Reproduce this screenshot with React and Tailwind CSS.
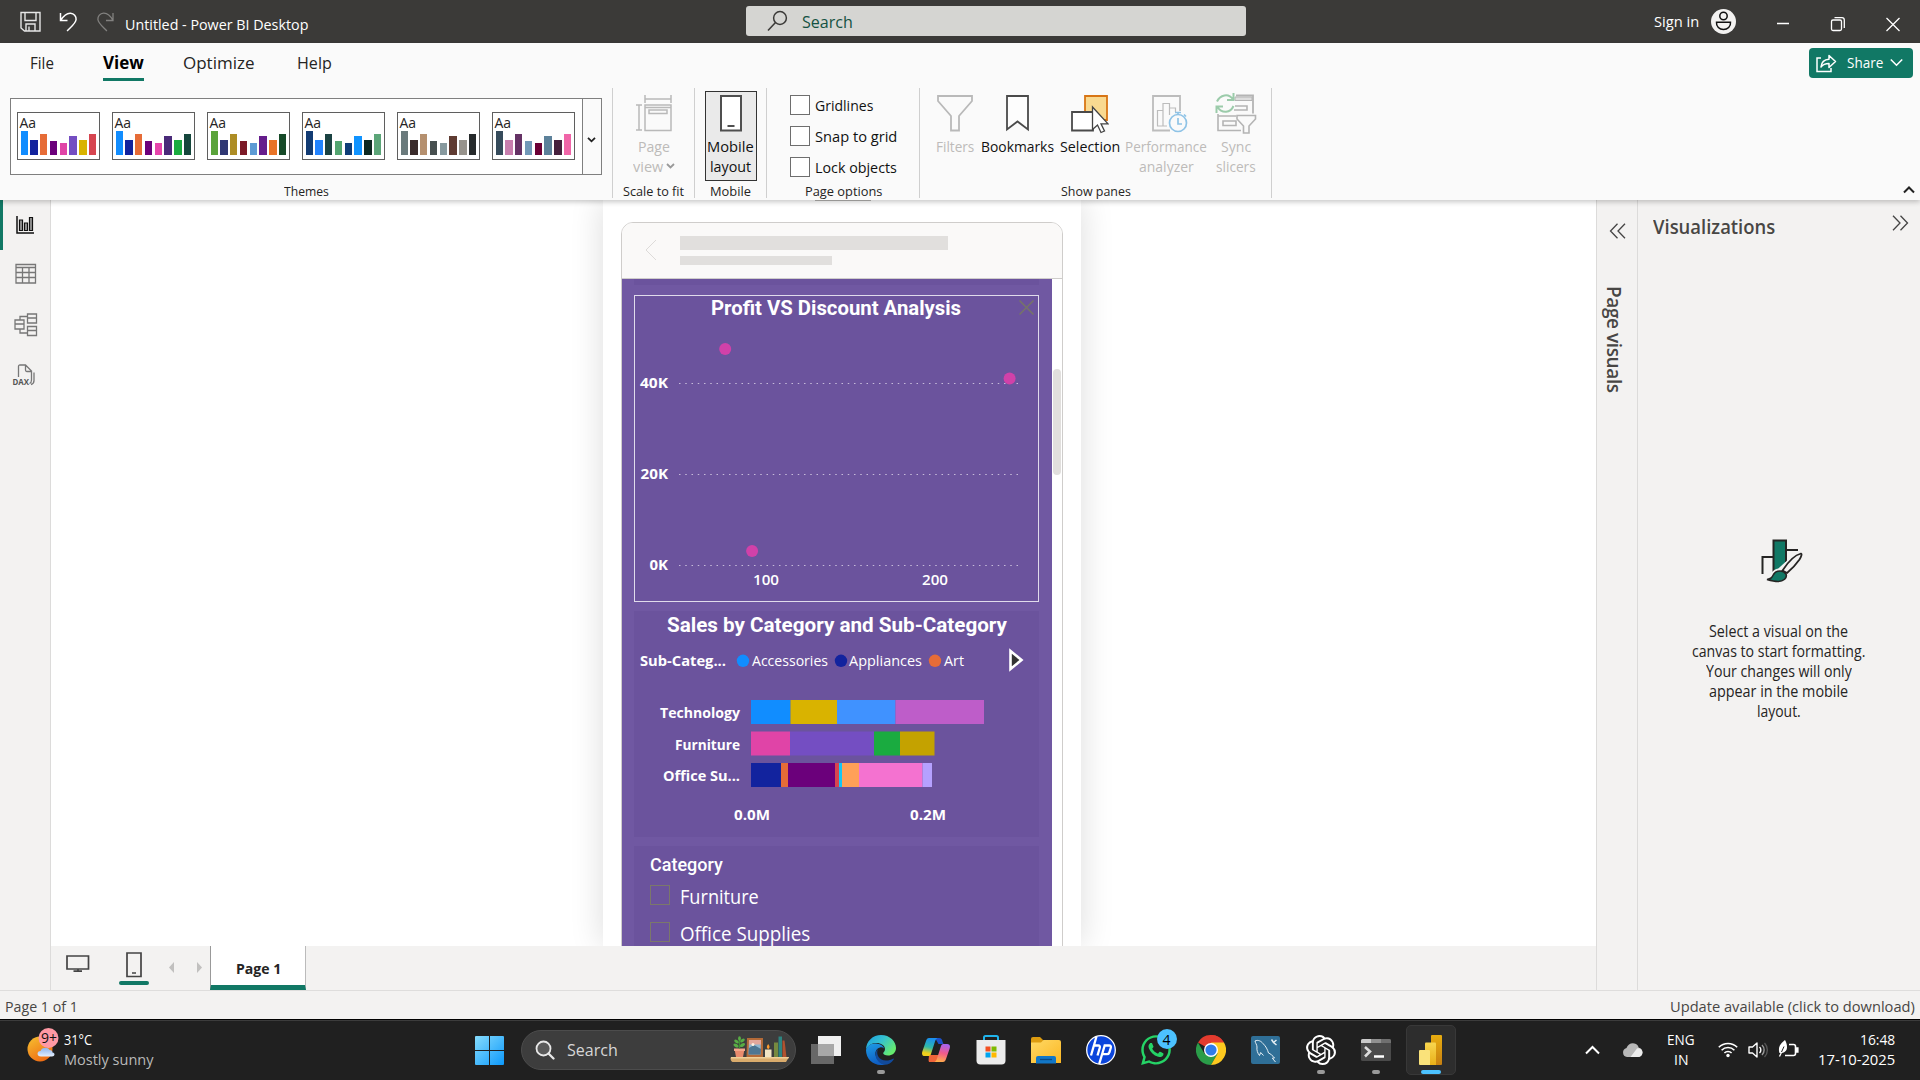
import React, { useLayoutEffect, useRef, useState } from "react";
import { SiOpenai } from "react-icons/si";
import { FaWhatsapp } from "react-icons/fa";

/* Text condensed or widened to an exact width. */
function Fit({ w, className = "", children }) {
  const ref = useRef(null);
  const [k, setK] = useState(1);
  useLayoutEffect(() => {
    const n = ref.current.offsetWidth;
    if (n) setK(w / n);
  }, [w]);
  return (
    <span className={"flex shrink-0 items-center justify-start " + className} style={{ width: w }}>
      <span ref={ref} className="inline-block shrink-0 origin-left whitespace-pre" style={{ transform: `scaleX(${k})` }}>
        {children}
      </span>
    </span>
  );
}

const HEIGHTS = [24, 15, 21, 14, 12, 19, 15, 21];
const THEMES = [
  ["#118DFF", "#12239E", "#E66C37", "#6B007B", "#E044A7", "#744EC2", "#D9B300", "#D64550"],
  ["#118DFF", "#12239E", "#E66C37", "#6B007B", "#E645AB", "#4A2A79", "#1AAB40", "#15463C"],
  ["#5AA33A", "#2F3774", "#AD8D25", "#7C1A27", "#5C9AD4", "#651D8C", "#E87427", "#164A28"],
  ["#123B73", "#2283FF", "#1B4242", "#52A570", "#0F3D77", "#1093FF", "#0D2820", "#5BA578"],
  ["#6A7A7C", "#3A2B2B", "#B5906F", "#474F4F", "#87999E", "#5F3B32", "#97938C", "#262A2B"],
  ["#364B5B", "#C87FAE", "#653265", "#7199B8", "#6B0035", "#5C819A", "#46203D", "#F065A8"],
];

function ThemeThumb({ colors }) {
  return (
    <div className="flex h-[48px] w-[83px] shrink-0 flex-col justify-between border border-[#5f5f5f] bg-white pt-[3px] pb-[4px] pl-[2px] pr-[2px]">
      <Fit w={17} className="h-[13px] text-[14px] text-[#252423]">Aa</Fit>
      <div className="flex items-end gap-[2.5px] pl-px">
        {colors.map((c, i) => (
          <div key={i} className="w-[7.3px]" style={{ height: HEIGHTS[i], backgroundColor: c }} />
        ))}
      </div>
    </div>
  );
}

function TitleBar() {
  return (
    <header className="flex h-[43px] items-start bg-[#3b3a38] text-white">
      <svg className="mt-[11px] ml-[20px] shrink-0" width="21" height="21" fill="none" stroke="#e6e6e6" strokeWidth="1.4">
        <path d="M1 1.5h19v18.5H4.5L1 17zM5 1.5v8h11v-8M6 20v-7h9v7M9 15.500v4.500" />
      </svg>
      <svg className="mt-[11px] ml-[18px] shrink-0" width="19" height="21" fill="none" stroke="#fff" strokeWidth="1.5">
        <path d="M1.500 2v7.500h7M1.500 9.500C5 4 8 2 11.500 2.200c3.500.2 5.800 3 5.600 6.300-.3 3.500-3 5.500-9 11.500" />
      </svg>
      <svg className="mt-[11px] ml-[18px] shrink-0" width="19" height="21" fill="none" stroke="#82817f" strokeWidth="1.3">
        <path d="M17 2v7.500h-7M17 9.500C14 4 11 2 7.500 2.200c-3.500.2-5.800 3-5.600 6.300.3 3.500 3 5.500 9 11.500" />
      </svg>
      <Fit w={183} className="mt-[14px] ml-[10px] h-[20px] text-[15px]">Untitled - Power BI Desktop</Fit>
      <div className="mt-[6px] ml-[438px] flex h-[30px] w-[500px] shrink-0 items-center rounded-[3px] bg-[#d5d5d2] pl-[21px]">
        <svg width="21" height="22" fill="none" stroke="#3b3a38" strokeWidth="1.5">
          <circle cx="13" cy="8" r="6.400" />
          <path d="M8.500 12.500L1 20.500" />
        </svg>
        <Fit w={51} className="ml-[14px] pt-[2px] text-[17px] text-[#145243]">Search</Fit>
      </div>
      <Fit w={45} className="mt-[11px] ml-[408px] h-[20px] text-[15px]">Sign in</Fit>
      <svg className="mt-[8px] ml-[11px] shrink-0" width="27" height="27">
        <circle cx="13.500" cy="13.500" r="12.500" fill="#f3f2f1" />
        <g fill="none" stroke="#111" strokeWidth="1.500">
          <circle cx="13.500" cy="8" r="3.700" />
          <path d="M6.500 14.200h14c.5 4.300-3 7.300-7 7.300s-7.500-3-7-7.300z" />
        </g>
      </svg>
      <svg className="ml-[38px] shrink-0" width="130" height="43" fill="none" stroke="#fff" strokeWidth="1.3">
        <path d="M2 23.500h12M111.500 18l13 13M124.500 18l-13 13" />
        <rect x="56.500" y="20" width="10" height="10.500" rx="1.500" />
        <path d="M59.500 17.700h7.500c1.400 0 2.300.9 2.300 2.300v8" />
      </svg>
    </header>
  );
}

function TabRow() {
  return (
    <nav className="flex h-[45px] items-start text-[17px] text-[#252423]">
      <Fit w={24} className="mt-[8px] ml-[30px] h-[24px]">File</Fit>
      <div className="mt-[8px] ml-[49px] flex h-[30px] w-[41px] shrink-0 flex-col justify-between border-b-[3px] border-[#117865]">
        <Fit w={41} className="h-[24px] font-bold text-black">View</Fit>
      </div>
      <Fit w={72} className="mt-[8px] ml-[39px] h-[24px]">Optimize</Fit>
      <Fit w={35} className="mt-[8px] ml-[42px] h-[24px]">Help</Fit>
      <button className="mt-[5px] mr-[7px] ml-auto flex h-[30px] w-[104px] items-center rounded-[4px] bg-[#117865] pl-[7px] text-white">
        <svg className="-mt-px" width="22" height="20" fill="none" stroke="#fff" strokeWidth="1.500">
          <path d="M5 5H1v13.500h14V15" />
          <path d="M5 14c.5-5 3-7.500 8-7.700V2.500l6.500 6-6.500 6v-4c-4 0-6 .8-8 3.500z" strokeLinejoin="round" />
        </svg>
        <Fit w={36} className="-mt-px ml-[9px] text-[15px]">Share</Fit>
        <svg className="-mt-px ml-[7px]" width="13" height="9" fill="none" stroke="#fff" strokeWidth="1.600"><path d="M.8 1.500l5.700 5.700 5.700-5.700" /></svg>
      </button>
    </nav>
  );
}

function Group({ label, lw, className, children }) {
  return (
    <section className={"flex h-[110px] shrink-0 flex-col items-center justify-between border-r border-[#cfcfcf] " + className}>
      {children}
      <Fit w={lw} className="h-[13px] text-[13.5px] leading-none text-[#252423]">{label}</Fit>
    </section>
  );
}

function Tool({ icon, lines, className = "text-[#111]" }) {
  return (
    <div className={"flex flex-col items-center text-[15px] leading-[20px] " + className}>
      <div className="mb-[2px] flex h-[39px] items-start justify-center">{icon}</div>
      {lines.map(([t, w, extra]) => (
        <div key={t} className="flex h-[20px] items-center">
          <Fit w={w}>{t}</Fit>
          {extra}
        </div>
      ))}
    </div>
  );
}

const Funnel = ({ s = "#b9b9b9" }) => (
  <svg width="36" height="37" fill="#fafafa" stroke={s} strokeWidth="1.800">
    <path d="M1 1h34v5L22 21v14.500h-8V21L1 6z" />
  </svg>
);

function Ribbon() {
  return (
    <div className="relative z-10 h-[157px] bg-[#fafafa] shadow-[0_2px_5px_rgba(0,0,0,0.22)]">
      <TabRow />
      <div className="flex">
        <Group label="Themes" lw={45} className="w-[613px]">
          <div className="mt-[10px] ml-[-1px] flex h-[77px] w-[592px] border border-[#7f7f7f] bg-white">
            <div className="flex w-[571px] items-center gap-[12px] pb-px pl-[6px]">
              {THEMES.map((c, i) => <ThemeThumb key={i} colors={c} />)}
            </div>
            <div className="flex flex-1 items-center justify-center border-l border-[#7f7f7f] bg-[#fafafa] pt-[6px]">
              <svg width="9" height="6" fill="none" stroke="#222" strokeWidth="1.800"><path d="M1 .8l3.500 3.500L8 .8" /></svg>
            </div>
          </div>
        </Group>
        <Group label="Scale to fit" lw={61} className="w-[82px]">
          <Tool
            className="mt-[7px] text-[#bdbbb9]"
            icon={
              <svg width="37" height="37" fill="none" stroke="#b9b9b9" strokeWidth="1.500">
                <path d="M10 0v8M36 0v8M10 4h26M1 10h6M1 35h6M4 10v25" />
                <path d="M10 10h26v25.500H10zM10 12.500h26M14 15h18v3.500H14z" />
              </svg>
            }
            lines={[["Page", 32], ["view", 30, <svg key="v" className="ml-[3px]" width="9" height="6" fill="none" stroke="#999" strokeWidth="1.800"><path d="M1 1l3.500 3.500L8 1" /></svg>]]}
          />
        </Group>
        <Group label="Mobile" lw={41} className="w-[72px]">
          <div className="mt-[3px] ml-px flex h-[90px] w-[52px] justify-center border border-[#333] bg-[#eaeaea] pt-[3px]">
            <Tool
              className="-ml-px text-[#111]"
              icon={
                <svg width="22" height="37" fill="#fff" stroke="#4f4f4f" strokeWidth="2">
                  <path d="M1 1h20v34.500H1zM7.500 31h7" />
                </svg>
              }
              lines={[["Mobile", 47], ["layout", 41]]}
            />
          </div>
        </Group>
        <Group label="Page options" lw={77} className="w-[153px]">
          <div className="mt-[7px] flex w-full flex-col gap-[11px] pl-[23px] text-[15px] text-[#111]">
            {[["Gridlines", 58], ["Snap to grid", 82], ["Lock objects", 82]].map(([t, w]) => (
              <label key={t} className="flex h-[20px] items-center gap-[5px]">
                <span className="h-[20px] w-[20px] border border-[#6e6e6e] bg-white" />
                <Fit w={w} className="h-[20px]">{t}</Fit>
              </label>
            ))}
          </div>
        </Group>
        <Group label="Show panes" lw={70} className="w-[352px]">
          <div className="mt-[7px] flex w-full pl-[12px]">
            <Tool className="w-[45px] text-[#bdbbb9]" icon={<Funnel />} lines={[["Filters", 38]]} />
            <Tool
              className="w-[80px] text-[#111]"
              icon={<svg width="23" height="37" fill="#fdfdfd" stroke="#4a4a4a" strokeWidth="1.800"><path d="M1 1h21v33.500l-10.500-8-10.500 8z" /></svg>}
              lines={[["Bookmarks", 73]]}
            />
            <Tool
              className="w-[65px] text-[#111]"
              icon={
                <svg width="38" height="39">
                  <path d="M14 1h22v24H14z" fill="#f9d990" stroke="#d87515" strokeWidth="1.800" />
                  <path d="M1 17h21v18.500H1z" fill="#fff" stroke="#4a4a4a" strokeWidth="1.800" />
                  <path d="M21.500 12v22.500l5-4.500 3.500 7.500 3.500-1.500-3.500-7.200h7z" fill="#fff" stroke="#444" strokeWidth="1.300" />
                </svg>
              }
              lines={[["Selection", 60]]}
            />
            <Tool
              className="w-[88px] text-[#bdbbb9]"
              icon={
                <svg className="ml-[8px]" width="36" height="39" fill="none" stroke="#bcbcbc" strokeWidth="1.500">
                  <path d="M18 35.500H1V1h27v15" strokeWidth="1.800" />
                  <path d="M5.500 31V15.500h5.500V31zM11 31V8.500h6.500V20M17.500 13h6v4M11 31h4" strokeWidth="1.200" />
                  <g stroke="#8fc3e6" strokeWidth="1.700">
                    <circle cx="26" cy="28" r="8.500" />
                    <path d="M26 23v6h4M23 17.500h6M26 17v3M32 19.500l2 2" />
                  </g>
                </svg>
              }
              lines={[["Performance", 82], ["analyzer", 55]]}
            />
            <Tool
              className="w-[52px] text-[#bdbbb9]"
              icon={
                <svg className="-mt-[2px]" width="42" height="41" fill="none" stroke="#b4b4b4" strokeWidth="1.600">
                  <path d="M21 2.500h17v18" strokeWidth="1.800" />
                  <path d="M20 4h17v3.500H20z" fill="#dedede" strokeWidth="1" />
                  <path d="M20 13h12v4H19M3 21v16.500h23M3 23h18M8 28h13v4.500H8z" />
                  <path d="M22 22.500h18.500v3.500l-6.500 7v7h-5.500v-7l-6.500-7z" fill="#fafafa" />
                  <g stroke="#9bcbaa" strokeWidth="2">
                    <path d="M2 8.500C5 2 13.500-.5 18 6.500M18.500 0v7h-6.500M18.500 13C15.500 20 7 21 2.500 14M1.500 20v-6.500H8" />
                  </g>
                </svg>
              }
              lines={[["Sync", 30], ["slicers", 40]]}
            />
          </div>
        </Group>
        <svg className="mt-[98px] mr-[5px] ml-auto" width="12" height="8" fill="none" stroke="#222" strokeWidth="2"><path d="M1 6.500l5-5 5 5" /></svg>
      </div>
    </div>
  );
}

function LeftRail() {
  return (
    <aside className="flex w-[51px] shrink-0 flex-col border-r border-[#dcdbda] bg-[#f3f2f1]">
      <div className="flex h-[50px] items-start border-l-[3px] border-[#117865] pt-[15px] pl-[13px]">
        <svg width="19" height="20" fill="#999" stroke="#111" strokeWidth="1.200">
          <path d="M1 1v17h17" fill="none" strokeWidth="1.500" />
          <path d="M3.500 5h3v10.500h-3zM8.500 8h3v7.500h-3zM13.500 2.500h3v13h-3z" />
        </svg>
      </div>
      <svg className="mt-[13px] ml-[15px]" width="22" height="22" fill="none" stroke="#777" strokeWidth="1.300">
        <path d="M1 1.500h19.500v18.500H1zM1 4.500h19.500M1 9.500h19.500M1 14.500h19.500M7.500 4.500V20M14 4.500V20" />
      </svg>
      <svg className="mt-[28px] ml-[14px]" width="24" height="24" fill="none" stroke="#777" strokeWidth="1.300">
        <path d="M1 7h9v9H1zM1 11h9M13.500 1H22.500v9h-9zM13.500 5h9M13.500 13.500h9v9h-9zM13.500 17.500h9M6 7V3.500h7.500M6 16v4h7.500" />
      </svg>
      <svg className="mt-[27px] ml-[12px]" width="24" height="22" fill="none" stroke="#777" strokeWidth="1.300">
        <path d="M6.500 13V2.500c0-1 .5-1.500 1.500-1.500h5.500l6 6v9c0 2-.5 3-2 3.500M13.500 1v5c0 1 .3 1.500 1.300 1.500h4.700M22 8.500v8c0 2.500-1 3.500-3 4" />
        <text x="0.500" y="20.500" fontSize="8" fill="#555" stroke="none" fontWeight="700" textLength="16.500" lengthAdjust="spacingAndGlyphs" fontFamily="Open Sans, sans-serif">DAX</text>
      </svg>
    </aside>
  );
}

/* SVG label with a fixed drawn width; y is the centre of its capitals. */
function Label({ x, y, w, size = 15, weight = 700, font = "Open Sans, sans-serif", children }) {
  return (
    <text x={x} y={y + size * 0.357} fontSize={size} fontWeight={weight} fontFamily={font} fill="#fff" textLength={w} lengthAdjust="spacingAndGlyphs">
      {children}
    </text>
  );
}

const DIN = "Roboto, sans-serif";

function ScatterChart() {
  return (
    <svg className="block bg-[#6b539d]" width="405" height="307">
      <rect x="0.500" y="0.500" width="404" height="306" fill="none" stroke="#e0dbeb" />
      <Label x={77} y={13} w={250} size={20.500} font={DIN}>Profit VS Discount Analysis</Label>
      <path d="M385.500 5.500l14 14M399.500 5.500l-14 14" stroke="#767468" strokeWidth="1.500" />
      {[[88.500, "40K", 6, 28], [179.500, "20K", 6.500, 27.500], [270.500, "0K", 15.500, 18.500]].map(([y, t, x, w]) => (
        <g key={t}>
          <path d={`M45 ${y}H386`} stroke="#c6bbd9" strokeWidth="1" strokeDasharray="1.500 4.750" />
          <Label x={x} y={y - 1} w={w} size={15}>{t}</Label>
        </g>
      ))}
      <Label x={119} y={285} w={26} weight={600}>100</Label>
      <Label x={288} y={285} w={26} weight={600}>200</Label>
      <g fill="#d141a9">
        <circle cx="91.200" cy="54" r="6" />
        <circle cx="375.600" cy="83.500" r="6" />
        <circle cx="118.100" cy="256" r="6" />
      </g>
    </svg>
  );
}

const ROWS = [
  { label: "Technology", lx: 26, lw: 80, y: 89, segs: [[117, 39.500, "#118DFF"], [156.500, 46.500, "#D9B300"], [203, 58.500, "#4092FF"], [261.500, 88.500, "#BE5DC9"]] },
  { label: "Furniture", lx: 41, lw: 65, y: 120.500, segs: [[117, 39, "#E044A7"], [156, 84, "#744EC2"], [240, 26, "#1AAB40"], [266, 34.500, "#C4A200"]] },
  { label: "Office Su...", lx: 29, lw: 77, y: 152, segs: [[117, 30, "#12239E"], [147, 7, "#E66C37"], [154, 47, "#6B007B"], [201, 4, "#D64550"], [205, 3, "#15C6F4"], [208, 17, "#FFA058"], [225, 63.500, "#F472D0"], [288.500, 9.500, "#B5A1FF"]] },
];

function SalesChart() {
  return (
    <svg className="mt-[9px] block bg-[#6b539d]" width="405" height="226">
      <Label x={33} y={14} w={340} size={20.500} font={DIN}>Sales by Category and Sub-Category</Label>
      <Label x={6} y={50} w={86}>Sub-Categ...</Label>
      <circle cx="109" cy="49.800" r="6.200" fill="#118DFF" />
      <Label x={118} y={50} w={76} weight={400}>Accessories</Label>
      <circle cx="207" cy="49.800" r="6.200" fill="#12239E" />
      <Label x={215} y={50} w={73} weight={400}>Appliances</Label>
      <circle cx="301" cy="49.800" r="6.200" fill="#E66C37" />
      <Label x={310} y={50} w={20} weight={400}>Art</Label>
      <path d="M376.500 40v18l11-9z" fill="#333" stroke="#fff" strokeWidth="2.600" />
      {ROWS.map((r) => (
        <g key={r.label}>
          <Label x={r.lx} y={r.y + 12.800} w={r.lw}>{r.label}</Label>
          {r.segs.map(([x, w, c]) => <rect key={x} x={x} y={r.y} width={w} height="24" fill={c} />)}
        </g>
      ))}
      <Label x={100} y={204} w={36}>0.0M</Label>
      <Label x={276} y={204} w={36}>0.2M</Label>
    </svg>
  );
}

function Slicer() {
  return (
    <div className="mt-[9px] h-[110px] bg-[#6b539d] pt-[8px] pl-[16px] text-white">
      <Fit w={73} className="h-[22px] text-[17.500px] font-medium [font-family:Roboto,sans-serif]">Category</Fit>
      {[["Furniture", 79, "mt-[8px]"], ["Office Supplies", 130, "mt-[13px]"]].map(([t, w, m]) => (
        <div key={t} className={"flex h-[24px] items-start " + m}>
          <span className="mt-px h-[20px] w-[20px] border border-[#7b776b]" />
          <Fit w={w} className="mt-px ml-[10px] h-[24px] text-[19.500px]">{t}</Fit>
        </div>
      ))}
    </div>
  );
}

function PageTabs() {
  return (
    <div className="flex h-[44px] shrink-0 items-start bg-[#f3f2f1]">
      <svg className="mt-[8px] ml-[15px]" width="24" height="19" fill="none" stroke="#444" strokeWidth="1.700">
        <path d="M1 2h21.500v13H1zM12 15v3M7.500 17.200h8.500" />
      </svg>
      <div className="mt-[6px] ml-[29px] flex h-[33px] w-[30px] flex-col items-center justify-between">
        <svg className="-ml-px" width="16" height="26" fill="none" stroke="#444" strokeWidth="1.700"><path d="M1 1h14v23.500H1zM6 21h4" /></svg>
        <span className="h-[4px] w-[30px] rounded-full bg-[#117865]" />
      </div>
      <svg className="mt-[16px] ml-[20px]" width="5" height="11" fill="#c1c0bf"><path d="M5 0v11L0 5.500z" /></svg>
      <svg className="mt-[16px] ml-[23px]" width="5" height="11" fill="#c1c0bf"><path d="M0 0v11l5-5.500z" /></svg>
      <div className="ml-[8px] flex h-[44px] w-[96px] items-center border-r border-b-[5px] border-l border-r-[#bbb] border-b-[#117865] border-l-[#999] bg-white pt-[6px] pl-[25px]">
        <Fit w={45} className="text-[15px] font-bold text-[#252423]">Page 1</Fit>
      </div>
    </div>
  );
}

function Canvas() {
  return (
    <main className="flex w-[1545px] shrink-0 flex-col overflow-hidden bg-white">
      <div className="relative flex h-[746px] justify-start overflow-hidden pl-[552px]">
        <div className="h-full w-[478px] bg-white px-[18px] pt-[22px] shadow-[0_0_32px_rgba(0,0,0,0.14)]">
          <div className="h-[740px] w-[442px] overflow-hidden rounded-t-[12px] border border-[#cfcdcb] bg-white">
            <div className="flex h-[56px] items-start border-b border-[#cfcdcb] bg-[#faf9f8] pt-[13px]">
              <svg className="mt-[3px] ml-[22px]" width="13" height="22" fill="none" stroke="#dddbd9"><path d="M12 1L2 11l10 10" /></svg>
              <div className="ml-[23px] flex flex-col gap-[6px]">
                <span className="h-[14px] w-[268px] bg-[#e1dfdd]" />
                <span className="h-[9px] w-[152px] bg-[#e1dfdd]" />
              </div>
            </div>
            <div className="flex">
              <div className="w-[430px] bg-[#7058a2] pl-[12px]">
                <div className="mb-[10px] h-[6px] w-[405px] bg-[#6b539d]" />
                <ScatterChart />
                <SalesChart />
                <div className="w-[405px]"><Slicer /></div>
              </div>
              <div className="mt-[90px] ml-px h-[106px] w-[8px] rounded-full bg-[#e1dfdd]" />
            </div>
          </div>
        </div>
        <span className="absolute top-0 left-[764px] h-px w-[56px] bg-[#b5b3b1]" />
      </div>
      <PageTabs />
    </main>
  );
}

function RightPanels() {
  return (
    <>
      <aside className="flex w-[41px] shrink-0 flex-col items-center border-l border-[#dcdbda] bg-[#f3f2f1] text-[#484644]">
        <svg className="mt-[23px]" width="17" height="16" fill="none" stroke="#444" strokeWidth="1.300"><path d="M8.500.8L1.500 8l7 7.200M16 .8L9 8l7 7.200" /></svg>
        <div className="mt-[47px] mr-[6px] flex h-[109px] w-[26px] items-start text-[19px] font-semibold [writing-mode:vertical-rl]">
          <span className="inline-block w-[26px] text-center leading-[26px] tracking-[-0.4px] whitespace-nowrap">Page visuals</span>
        </div>
      </aside>
      <aside className="flex flex-1 flex-col items-center border-l border-[#dcdbda] bg-[#f3f2f1]">
        <div className="flex w-full items-start pl-[15px]">
          <Fit w={122} className="mt-[14px] h-[26px] text-[19.500px] font-semibold text-[#484644]">Visualizations</Fit>
          <svg className="mt-[15px] mr-[11px] ml-auto" width="17" height="16" fill="none" stroke="#444" strokeWidth="1.300"><path d="M1 .8L8 8l-7 7.200M8.500.8l7 7.200-7 7.200" /></svg>
        </div>
        <svg className="mt-[299px] ml-[5px]" width="42" height="44" fill="none" stroke="#252423" strokeWidth="2">
          <path d="M1.500 35V18h11M25 11h12" />
          <path d="M12.500 34V1.500H25v21L12.500 34z" fill="#117865" stroke="none" />
          <path d="M12.500 33V1.500H25V23" />
          <path d="M22 31.500C27 23 34 16 40 14.500c1.200.3.300 3-1.500 6-3.500 5-7.500 9.500-11.500 13.500z" fill="#f3f2f1" stroke="#f3f2f1" strokeWidth="5" />
          <path d="M6 40.500c4-.5 5-2 6.500-5 2.500-4.500 10-4.500 12.500-.5 1.500 4-2.500 7.500-8 7.500-4 0-7.500-1-11-2z" fill="#f3f2f1" stroke="#f3f2f1" strokeWidth="5" />
          <path d="M21.500 31.500C27 23 34 16 40 14.500c1.200.3.300 3-1.500 6-3.500 5-7.500 9.500-12.500 13.500z" fill="#f3f2f1" strokeWidth="1.800" />
          <path d="M6 40.500c4-.5 5-2 6.500-5 2.500-4.500 10-4.500 12.500-.5 1.500 4-2.500 7.500-8 7.500-4 0-7.500-1-11-2z" fill="#117865" strokeWidth="1.600" />
        </svg>
        <div className="mt-[38px] -ml-px flex flex-col items-center text-[15.500px] leading-[20px] text-[#252423]">
          <Fit w={139}>Select a visual on the</Fit>
          <Fit w={173}>canvas to start formatting.</Fit>
          <Fit w={146}>Your changes will only</Fit>
          <Fit w={139}>appear in the mobile</Fit>
          <Fit w={44}>layout.</Fit>
        </div>
      </aside>
    </>
  );
}

function Tile({ children, dot, active }) {
  return (
    <div className="flex w-[55px] shrink-0 flex-col items-center pt-[5px]">
      <div className={"flex h-[50px] w-[50px] flex-col items-center justify-end rounded-[5px] " + (active ? "border border-[#383838] bg-[#2d2d2d]" : "border border-transparent")}>
        <div className="flex h-[34px] w-[34px] shrink-0 items-center justify-center">{children}</div>
        <span className={"mt-[3px] h-[4px] shrink-0 rounded-full " + (active ? "w-[20px] bg-[#4cc2ff]" : dot ? "w-[8px] bg-[#9a9a9a]" : "w-[8px]")} />
      </div>
    </div>
  );
}

function ShelfArt() {
  return (
    <svg width="60" height="28">
      <path d="M1 21h58l-3 5H2.500C1 26 0 22.500 1 21z" fill="#d9ab6c" />
      <path d="M1 21h58l-.6 1.500H1z" fill="#efcf98" />
      <path d="M4.500 13h10l-1.500 8H6z" fill="#e98b6d" /><path d="M4 12.500h11v2.500H4z" fill="#f4a78a" />
      <path d="M9.500 12.500V4" stroke="#3f8f35" strokeWidth="1.400" />
      <g fill="#58ad45"><ellipse cx="6" cy="9.500" rx="2.800" ry="1.600" transform="rotate(30 6 9.500)" /><ellipse cx="12.500" cy="9" rx="2.800" ry="1.600" transform="rotate(-30 12.500 9)" /><ellipse cx="6.500" cy="5.500" rx="2.600" ry="1.500" transform="rotate(35 6.500 5.500)" /><ellipse cx="12.500" cy="4.500" rx="2.600" ry="1.500" transform="rotate(-35 12.500 4.500)" /><ellipse cx="9.500" cy="2.500" rx="1.400" ry="2.300" /></g>
      <path d="M17 2h16v19H16.500z" fill="#b36a38" /><path d="M19 4h12l-.5 14.500H18.500z" fill="#8fb6d0" /><path d="M19 12l5-3 7 4-.5 5.500h-12z" fill="#4d7693" /><path d="M19 4h12v4.500H19z" fill="#e3a79b" />
      <circle cx="23" cy="8.500" r="1.500" fill="#fff0e0" />
      <path d="M35 13.500h6.500V21H35z" fill="#f3e4c3" /><path d="M38.200 8c2 2.500 1.500 4.500 0 5-1.500-.5-2-2.500 0-5z" fill="#ff9b2e" />
      <path d="M44 6.500h4V21h-4z" fill="#77893f" /><path d="M48.500.5h3.500V21h-3.500z" fill="#2d8580" /><path d="M52.500 4.500h2l2 16.500h-4z" fill="#b1532f" />
    </svg>
  );
}

function Taskbar() {
  return (
    <footer className="flex h-[61px] shrink-0 items-start border-t border-black bg-[#202020] text-white shadow-[inset_0_1px_0_#3c3c3c]">
      <div className="flex w-[475px] shrink-0 pt-[8px] pl-[27px]">
        <svg width="34" height="36">
          <defs>
            <linearGradient id="sun" x1="0" y1="0" x2=".6" y2="1"><stop offset="0" stopColor="#f6c231" /><stop offset="1" stopColor="#ef6c13" /></linearGradient>
            <linearGradient id="cl" x1="0" y1="0" x2="0" y2="1"><stop offset="0" stopColor="#8db4ec" /><stop offset="1" stopColor="#e4eefc" /></linearGradient>
          </defs>
          <circle cx="13" cy="21" r="12.500" fill="url(#sun)" />
          <path d="M14 28.500c-4.500 0-4.500-5.500-.5-5.500 1-4 7.500-4.500 9-1 2 0 3 1 3 2.500 3 .5 2.500 4-.5 4z" fill="url(#cl)" />
          <circle cx="21.500" cy="10" r="10" fill="#ff99a4" />
          <text x="14" y="15" fontSize="14" fill="#111" fontFamily="Open Sans, sans-serif" textLength="16" lengthAdjust="spacingAndGlyphs">9+</text>
        </svg>
        <div className="ml-[3px] text-[15px] leading-[20px]">
          <Fit w={28} className="mt-[1px]">31°C</Fit>
          <Fit w={89} className="text-[#b9b9b9]">Mostly sunny</Fit>
        </div>
      </div>
      <svg className="mt-[16px] shrink-0" width="29" height="29">
        <defs><linearGradient id="win" x1="0" y1="0" x2="1" y2="1"><stop offset="0" stopColor="#86dcfd" /><stop offset="1" stopColor="#0d99fb" /></linearGradient></defs>
        <path d="M0 1a1 1 0 011-1h13v14H0zM15 0h13a1 1 0 011 1v13H15zM0 15h14v14H1a1 1 0 01-1-1zM15 15h14v13a1 1 0 01-1 1H15z" fill="url(#win)" />
      </svg>
      <div className="mt-[10px] ml-[17px] flex h-[40px] w-[275px] shrink-0 items-center rounded-full border border-[#4c4c4c] bg-[#3d3d3d] pl-[13px]">
        <svg width="20" height="20" fill="#5a5a5a" stroke="#e8e8e8" strokeWidth="1.800"><circle cx="8.500" cy="8.500" r="7" /><path d="M13.500 13.500l5 5" strokeLinecap="round" strokeWidth="2.300" /></svg>
        <Fit w={51} className="ml-[12px] text-[17px] text-[#d6d6d6]">Search</Fit>
        <div className="ml-[112px]"><ShelfArt /></div>
      </div>
      <div className="ml-[2px] flex shrink-0">
        <Tile>
          <svg width="32" height="30"><path d="M8 1h23v20H8z" fill="#f0f0f0" /><path d="M1 9h23v20H1z" fill="#767676" opacity=".85" /><path d="M8 9h16v12H8z" fill="#a8a8a8" /></svg>
        </Tile>
        <Tile dot>
          <svg width="30" height="30" viewBox="0 0 30 30">
            <defs>
              <linearGradient id="e1" x1="0" y1="0" x2="1" y2=".6"><stop offset="0" stopColor="#1b9de2" /><stop offset=".5" stopColor="#35c1d0" /><stop offset="1" stopColor="#66eb6e" /></linearGradient>
              <linearGradient id="e2" x1="0" y1="0" x2=".3" y2="1"><stop offset="0" stopColor="#1e9de6" /><stop offset="1" stopColor="#0f5fc4" /></linearGradient>
            </defs>
            <path d="M0 15C0 6 7 0 15 0c9 0 15 6.500 15 13 0 5-4 7.500-8 7.500-3 0-4.800-1-4.800-2.200 0-1 1.800-1.500 1.800-4.300C19 10 14 7.500 9.500 8 4.500 8.500 1 11.500 0 15z" fill="url(#e1)" />
            <path d="M0 15c1-4 5-7 10-6.500 4 .2 7.500 2 8 5-1-1-2.500-1.500-4-1-4 1-5.500 5-4 9 1.300 3.800 4.500 7 9 8-1.300.4-2.700.5-4 .5C6.500 30 0 23.500 0 15z" fill="url(#e2)" />
            <path d="M12 14c-2.500 5 1 11.500 8 11.500 3 0 5-.7 7-1.800.7-.3 1 .2.700.7C25.500 28 21.500 30 18 29.700 11 28 6.500 19 12 14z" fill="#114a9b" />
          </svg>
        </Tile>
        <Tile>
          <svg width="28" height="26" viewBox="0 0 28 26">
            <defs>
              <linearGradient id="c1" x1=".5" y1="0" x2=".3" y2="1"><stop offset="0" stopColor="#1a8ef0" /><stop offset=".5" stopColor="#2fb9a8" /><stop offset=".85" stopColor="#f0d01c" /></linearGradient>
              <linearGradient id="c2" x1=".6" y1="0" x2=".4" y2="1"><stop offset="0" stopColor="#a763f2" /><stop offset=".5" stopColor="#f15a8a" /><stop offset="1" stopColor="#ffad4a" /></linearGradient>
            </defs>
            <path d="M13 1h4c2.500 0 3 1.500 3.500 3.500L21.500 7h-5z" fill="#1c50c8" />
            <path d="M7 25h6c2 0 3-1 3.500-3l1-4H7c0 3-1 5 0 7z" fill="#f0643a" />
            <path d="M7 1h8.500c-1.500.7-2 2-2.500 3.500L9 17c-.5 1.500-1.500 2-3 2H3c-3 0-3.500-2-2.500-5L4 4c.6-2 1.500-3 3-3z" fill="url(#c1)" />
            <path d="M21 25h-8.500c1.500-.7 2-2 2.500-3.500L19 9c.5-1.500 1.500-2 3-2h3c3 0 3.500 2 2.500 5L24 22c-.6 2-1.500 3-3 3z" fill="url(#c2)" />
          </svg>
        </Tile>
        <Tile>
          <svg width="30" height="30">
            <path d="M8 7V2.500C8 1.500 8.500 1 9.500 1h11c1 0 1.500.5 1.500 1.500V7" fill="none" stroke="#20b4ec" strokeWidth="2" />
            <path d="M.5 5h29v20.500a4 4 0 01-4 4h-21a4 4 0 01-4-4z" fill="#ececec" />
            <path d="M9.500 11.500h5v5h-5z" fill="#f25022" /><path d="M15.500 11.500h5v5h-5z" fill="#7fba00" /><path d="M9.500 17.500h5v5h-5z" fill="#00a4ef" /><path d="M15.500 17.500h5v5h-5z" fill="#ffb900" />
          </svg>
        </Tile>
        <Tile>
          <svg width="30" height="28">
            <defs><linearGradient id="fo" x1="0" y1="0" x2="1" y2="1"><stop offset="0" stopColor="#ffd965" /><stop offset="1" stopColor="#fbb723" /></linearGradient></defs>
            <path d="M0 3a2 2 0 012-2h7l3.500 3.500V9H0z" fill="#dd9c10" />
            <path d="M0 6.500h10l2.500-2.500H28a2 2 0 012 2v21H0z" fill="url(#fo)" />
            <path d="M5 27.500V22a2 2 0 012-2h16a2 2 0 012 2v5.500z" fill="#1277c7" /><path d="M9 23.500h12" stroke="#0a4a86" strokeWidth="1.300" />
          </svg>
        </Tile>
        <Tile>
          <svg width="30" height="30">
            <circle cx="15" cy="15" r="14.300" fill="#0b45dc" stroke="#fff" strokeWidth="1.300" />
            <g fill="none" stroke="#fff" strokeWidth="2.300">
              <path d="M10.500 1.500L5 20.500M8 10.500h4.200c1.500 0 2 .8 1.600 2.200L11.500 20.500" />
              <path d="M13.200 29l5.500-18.500h4.500c1.500 0 2 .8 1.600 2.200l-1.400 4.600c-.4 1.300-1 1.900-2.500 1.900h-4.200" />
            </g>
          </svg>
        </Tile>
        <Tile>
          <div className="relative">
            <FaWhatsapp className="h-[34px] w-[34px] text-[#25d366]" />
            <span className="absolute -top-[4px] left-[18px] flex h-[20px] w-[20px] items-center justify-center rounded-full bg-[#4cc2ff] text-[14px] text-black">4</span>
          </div>
        </Tile>
        <Tile>
          <svg width="30" height="30" viewBox="0 0 30 30">
            <path d="M15 15L2 7.500A15 15 0 0128 7.500z" fill="#e33b2e" /><path d="M15 0A15 15 0 0128 7.500H15z" fill="#e33b2e" />
            <path d="M2 7.500A15 15 0 0015 30l6.500-11.200L8.500 18.700z" fill="#2a9d49" />
            <path d="M28 7.500H15l6.500 11.300L15 30A15 15 0 0028 7.500z" fill="#fdc91f" />
            <circle cx="15" cy="15" r="7" fill="#fff" /><circle cx="15" cy="15" r="5.600" fill="#2f7cea" />
          </svg>
        </Tile>
        <Tile>
          <svg width="29" height="29" fill="none" stroke="#e6eff5" strokeWidth="1">
            <rect width="29" height="28" rx="2" fill="#2f6f97" stroke="none" />
            <path d="M4 5c3-1.500 6 0 8 2.500 3 3 4.500 6 5.500 9.500 2 .8 4 2.500 6 5l-2.200.2 3.200 3.800M4 5C4.200 7 6 8.500 6 11c-.5 3 .5 6 2.500 8.500l1.200-3 2.800 3" />
            <path d="M20.500 3.500l2 3 3 2.500M25.500 4l-3 2.500" strokeWidth="1.500" />
          </svg>
        </Tile>
        <Tile dot><SiOpenai className="h-[30px] w-[30px] text-white" /></Tile>
        <Tile dot>
          <svg width="30" height="24"><rect y="1" width="30" height="22" rx="1.500" fill="#4a4a4a" /><path d="M0 2.500A1.500 1.500 0 011.500 1H10v4H0z" fill="#c9c9c9" /><path d="M10 1h10v4H10z" fill="#909090" /><path d="M20 1h8.500A1.500 1.500 0 0130 2.500V5H20z" fill="#707070" /><path d="M4 9l5 4.500L4 18.500" fill="none" stroke="#dcdcdc" strokeWidth="2.600" /><path d="M13 18.500h10" stroke="#fff" strokeWidth="2.500" /></svg>
        </Tile>
        <Tile active>
          <svg width="23" height="30">
            <defs><linearGradient id="p1" x1="0" y1="0" x2="0" y2="1"><stop offset="0" stopColor="#e8ad10" /><stop offset="1" stopColor="#c78011" /></linearGradient><linearGradient id="p2" x1="0" y1="0" x2="0" y2="1"><stop offset="0" stopColor="#f8d64f" /><stop offset="1" stopColor="#e9af18" /></linearGradient></defs>
            <path d="M12 1a1 1 0 011-1h9a1 1 0 011 1v28a1 1 0 01-1 1H12z" fill="url(#p1)" /><path d="M6 8.500a1 1 0 011-1h9a1 1 0 011 1V30H6z" fill="url(#p2)" /><path d="M0 16a1 1 0 011-1h9a1 1 0 011 1v14H1a1 1 0 01-1-1z" fill="#fae27a" />
          </svg>
        </Tile>
      </div>
      <svg className="mt-[25px] ml-[127px] shrink-0" width="15" height="10" fill="none" stroke="#fff" strokeWidth="2"><path d="M1 8.500l6.500-6.500L14 8.500" /></svg>
      <svg className="mt-[22px] ml-[22px] shrink-0" width="21" height="16">
        <path d="M5 15a4.600 4.600 0 01-.5-9C6 2 10 0 14 2c1.500.8 2.300 2 2.600 3.500C19 6 20.500 8 20.500 10.500 20.500 13 18.500 15 16 15z" fill="#b8b8b8" />
        <path d="M8.500 15L15 6.500c3-1 5.500 1.300 5.500 4 0 2.500-2 4.500-4.500 4.500z" fill="#ececec" />
      </svg>
      <div className="mt-[9px] ml-[24px] flex w-[28px] shrink-0 flex-col items-center text-[15px] leading-[20px]"><Fit w={28}>ENG</Fit><Fit w={14}>IN</Fit></div>
      <svg className="mt-[21px] ml-[23px] shrink-0" width="20" height="17" fill="none" stroke="#fff" strokeWidth="1.600"><path d="M.8 6.300a13 13 0 0118.400 0M3.600 9.200a9 9 0 0112.800 0M6.400 12a5 5 0 017.200 0" /><circle cx="10" cy="14.500" r="1.700" fill="#fff" stroke="none" /></svg>
      <svg className="mt-[21px] ml-[10px] shrink-0" width="21" height="17" fill="none" stroke="#fff" strokeWidth="1.400"><path d="M1 6h3.500L9 2v14l-4.500-4H1z" strokeLinejoin="round" /><path d="M11.500 6a4 4 0 010 6" /><path d="M14 4a7 7 0 010 10" stroke="#999" /><path d="M16.500 2a10 10 0 010 14" stroke="#555" /></svg>
      <svg className="mt-[19px] ml-[9px] shrink-0" width="21" height="19" fill="none" stroke="#fff" strokeWidth="1.600"><path d="M11 5.500h4.500a2 2 0 012 2v7a2 2 0 01-2 2H7M18.500 9v4h1.300V9z" /><path d="M1.500 14C-.5 8 3 4 7 1c2 3.500 3.500 9.500-.5 12-1.500 1-3 1.200-5 1z" fill="#fff" stroke="none" /><path d="M1.500 17.500L6 8" strokeWidth="1.300" /><path d="M3.500 13L6 7.500" stroke="#222" strokeWidth="1" /></svg>
      <div className="mt-[9px] mr-[25px] ml-auto flex flex-col items-end text-[15px] leading-[20px]"><Fit w={35}>16:48</Fit><Fit w={77}>17-10-2025</Fit></div>
    </footer>
  );
}

export default function App() {
  return (
    <div className="flex h-[1080px] w-[1920px] flex-col overflow-hidden bg-[#f3f2f1] [font-family:'Open_Sans','Noto_Sans',sans-serif]">
      <TitleBar />
      <Ribbon />
      <div className="flex h-[790px] shrink-0">
        <LeftRail />
        <Canvas />
        <RightPanels />
      </div>
      <div className="flex h-[29px] shrink-0 items-center justify-between border-t border-[#dedddc] bg-[#f3f2f1] pt-[2px] pr-[5px] pl-[5px] text-[15px] text-[#484644]">
        <Fit w={73}>Page 1 of 1</Fit>
        <Fit w={245}>Update available (click to download)</Fit>
      </div>
      <Taskbar />
    </div>
  );
}
